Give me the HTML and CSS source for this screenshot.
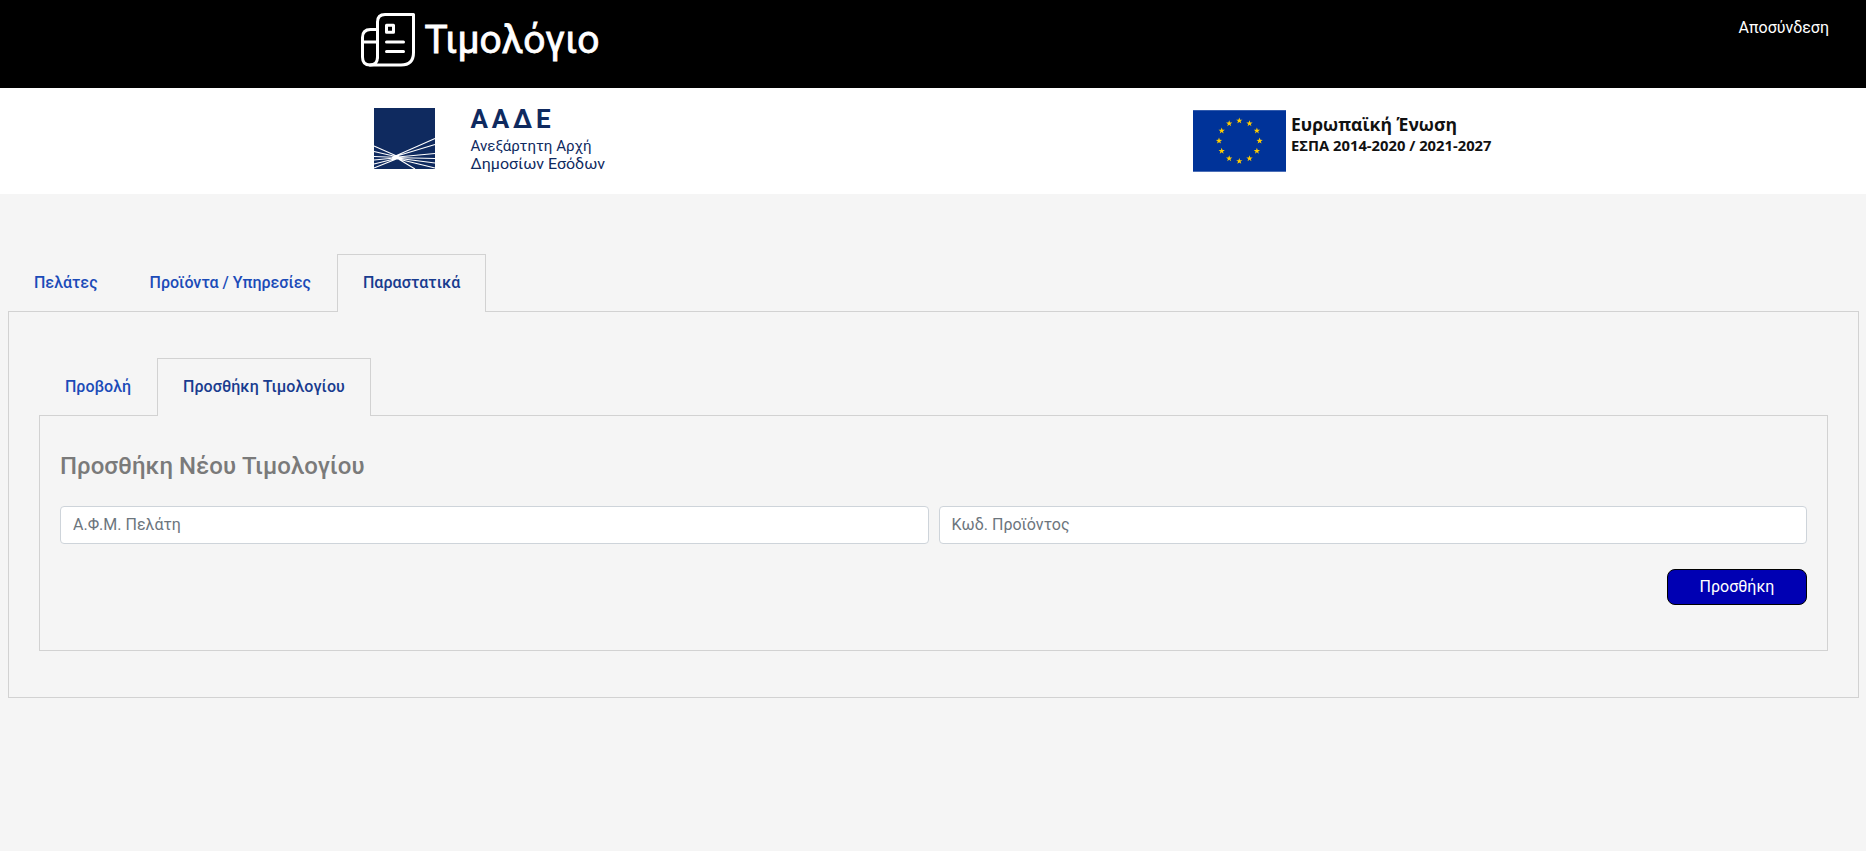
FILE: index.html
```html
<!DOCTYPE html>
<html lang="el">
<head>
<meta charset="utf-8">
<title>Τιμολόγιο</title>
<link rel="stylesheet" href="styles.css">
</head>
<body>
<header class="topbar">
  <svg class="brand" width="260" height="88" viewBox="350 0 260 88" role="img" aria-label="Τιμολόγιο">
    <g fill="none" stroke="#fff" stroke-width="3" stroke-linecap="round" stroke-linejoin="round">
      <path d="M377.500 57.500V22q0-7.500 7.500-7.500h28.500V52.500q0 12.500-12.500 12.500H370"/>
      <path d="M377.500 29.500h-7q-8 0-8 8v19.500q0 8 7.500 8t7.500-8"/>
      <path d="M362.500 42h15M386.500 42h17M386.500 51.500h17M386.500 25.300h7v7h-7z"/>
    </g>
    <text class="brand-text" x="424.500" y="53" textLength="175" lengthAdjust="spacingAndGlyphs">Τιμολόγιο</text>
  </svg>
  <a class="logout">Αποσύνδεση</a>
</header>
<section class="logos">
  <svg class="aade" width="260" height="105" viewBox="350 88 260 105">
    <rect x="374" y="108" width="61" height="61" fill="#0f2a5f"/>
    <g stroke="#fff" stroke-width="1.100" fill="none">
      <path d="M392 157.500L435 138.500M392 157.500L435 144.500M392 157.500L435 153.500M392 157.500L435 158.500M392 157.500L435 163M392 157.500L435 168M396 157.500L415 169M400 157.500L374 146M400 157.500L374 151.500M400 157.500L374 156.500M400 157.500L374 160M400 157.500L374 164M400 157.500L374 168"/>
    </g>
    <ellipse cx="396" cy="157.500" rx="4" ry="1.600" fill="#fff"/>
    <g class="aade-text">
      <text class="aade-name" x="470.500" y="127.500" textLength="80">ΑΑΔΕ</text>
      <text x="470.500" y="150.500" textLength="121" lengthAdjust="spacingAndGlyphs">Ανεξάρτητη Αρχή</text>
      <text x="470.500" y="168.500" textLength="134.500" lengthAdjust="spacingAndGlyphs">Δημοσίων Εσόδων</text>
    </g>
  </svg>
  <svg class="eu" width="320" height="105" viewBox="1180 88 320 105">
    <defs><path id="star" fill="#fc0" d="M0-3.300L.8-1.050 3.140-1.020 1.270.4 1.940 2.670 0 1.320-1.940 2.670-1.270.4-3.140-1.020-.8-1.050z"/></defs>
    <rect x="1193" y="110.200" width="93" height="61.500" fill="#039"/>
    <use href="#star" x="1239.300" y="120.700"/><use href="#star" x="1249.500" y="123.500"/><use href="#star" x="1256.900" y="130.800"/><use href="#star" x="1259.600" y="140.900"/><use href="#star" x="1256.900" y="151"/><use href="#star" x="1249.500" y="158.500"/><use href="#star" x="1239.300" y="161.200"/><use href="#star" x="1229.200" y="158.500"/><use href="#star" x="1221.700" y="151"/><use href="#star" x="1219" y="140.900"/><use href="#star" x="1221.700" y="130.800"/><use href="#star" x="1229.200" y="123.500"/>
    <g class="eu-text">
      <text class="eu-title" x="1291" y="130.500" textLength="166" lengthAdjust="spacingAndGlyphs">Ευρωπαϊκή Ένωση</text>
      <text x="1291" y="151.300" textLength="200.500" lengthAdjust="spacingAndGlyphs">ΕΣΠΑ 2014-2020 / 2021-2027</text>
    </g>
  </svg>
</section>
<main class="content">
  <nav class="tabs">
    <a class="tab">Πελάτες</a><a class="tab">Προϊόντα / Υπηρεσίες</a><a class="tab active">Παραστατικά</a>
  </nav>
  <section class="panel outer">
    <nav class="tabs">
      <a class="tab">Προβολή</a><a class="tab active">Προσθήκη Τιμολογίου</a>
    </nav>
    <form class="panel inner">
      <h1 class="title">Προσθήκη Νέου Τιμολογίου</h1>
      <div class="fields">
        <input class="field" type="text" placeholder="Α.Φ.Μ. Πελάτη">
        <input class="field" type="text" placeholder="Κωδ. Προϊόντος">
      </div>
      <button class="submit" type="button">Προσθήκη</button>
    </form>
  </section>
</main>
</body>
</html>
```
FILE: styles.css
```css
* { box-sizing: border-box; }
body {
  margin: 0;
  min-height: 851px;
  background: #f5f5f5;
  font: 16px/24px Roboto, sans-serif;
}
.topbar {
  display: flex;
  justify-content: space-between;
  height: 88px;
  padding: 0 37px 0 350px;
  background: #000;
}
.brand, .aade, .eu { display: block; }
.brand-text {
  font: 400 39.5px Roboto, sans-serif;
  fill: #fff;
  stroke: #fff;
  stroke-width: 0.8px;
}
.logout { padding-top: 16px; color: #fff; }
.logos {
  display: flex;
  justify-content: space-between;
  height: 106px;
  padding: 0 366px 0 350px;
  background: #fff;
}
.aade-text { font: 400 15px Roboto, sans-serif; fill: #0f2a5f; }
.aade-name { font-size: 26px; font-weight: 700; }
.eu-text { font: 700 15px "Open Sans", sans-serif; fill: #111; }
.eu-title { font-size: 18px; }
.content { padding: 60px 7px 0 8px; }
.tabs { display: flex; }
.tab {
  height: 57px;
  padding: 16px 25px;
  border: 1px solid transparent;
  border-bottom: 0;
  font-weight: 500;
  letter-spacing: 0.01px;
  color: #1b4bb8;
}
.tab.active {
  height: 58px;
  margin-bottom: -1px;
  border-color: #d2d2d2;
  background: #f5f5f5;
  color: #193c8f;
  letter-spacing: 0.06px;
  position: relative;
}
.panel { border: 1px solid #d2d2d2; }
.outer { height: 387px; padding: 46px 30px; }
.inner {
  display: flex;
  flex-direction: column;
  height: 236px;
  padding: 36px 20px 0;
}
.title {
  margin: 0 0 25px;
  font-size: 24px;
  line-height: 29px;
  font-weight: 500;
  letter-spacing: 0.03px;
  color: #7a7a7a;
}
.fields { display: flex; gap: 10px; }
.field {
  flex: 1;
  min-width: 0;
  height: 38px;
  padding: 5px 12px 7px;
  border: 1px solid #ced4da;
  border-radius: 4px;
  background: #fff;
  font: inherit;
}
.field::placeholder { color: #6c757d; }
.submit {
  align-self: flex-end;
  width: 140px;
  height: 36px;
  margin-top: 25px;
  padding: 0;
  border: 1px solid #000;
  border-radius: 8px;
  background: #0000b3;
  color: #fff;
  font: 16px/24px Roboto, sans-serif;
}
```
